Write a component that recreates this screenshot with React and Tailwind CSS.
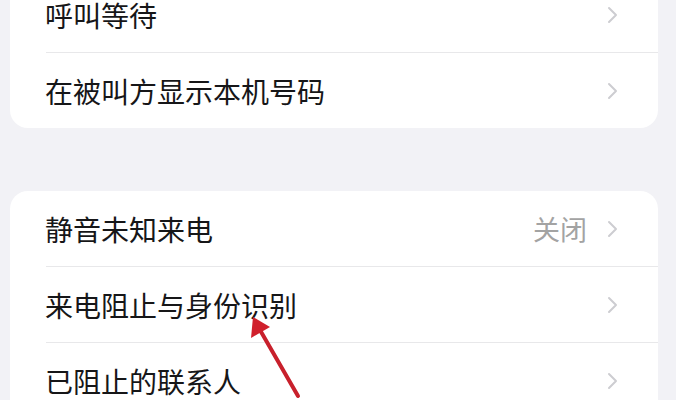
import React from 'react';

const Chevron = () => (
  <svg width="11" height="18" viewBox="0 0 11 18" className="shrink-0">
    <path d="M2 2 L9 9 L2 16" fill="none" stroke="#cdcdd1" strokeWidth="2" strokeLinecap="round" strokeLinejoin="round" />
  </svg>
);

const Row = ({ label, value, last }) => (
  <div className="flex flex-col">
    <div className="h-[75px] flex items-center pl-[35px] pr-[40px]">
      <span className="flex-1 text-[28px] text-[#161618] leading-none">{label}</span>
      {value && <span className="text-[27px] text-[#a3a3a3] leading-none mr-[20px]">{value}</span>}
      <Chevron />
    </div>
    {!last && <div className="ml-[36px] h-px bg-[#e8e8ea]" />}
  </div>
);

export default function App() {
  return (
    <div
      className="relative w-[676px] h-[400px] overflow-hidden bg-[#f2f2f6]"
      style={{ fontFamily: '"Noto Sans CJK SC", "Noto Sans", sans-serif' }}
    >
      <div className="flex flex-col gap-[63px] pl-[10px] pr-[18px] -mt-[23px]">
        <div className="bg-white rounded-[18px] overflow-hidden">
          <Row label="呼叫等待" />
          <Row label="在被叫方显示本机号码" last />
        </div>
        <div className="bg-white rounded-[18px] overflow-hidden">
          <Row label="静音未知来电" value="关闭" />
          <Row label="来电阻止与身份识别" />
          <Row label="已阻止的联系人" last />
        </div>
      </div>

      {/* red arrow annotation */}
      <svg className="absolute left-0 top-0 pointer-events-none" width="676" height="400">
        <line x1="298" y1="396" x2="260" y2="330" stroke="#c8202c" strokeWidth="4" strokeLinecap="round" />
        <polygon points="253,317 251,338 270,327" fill="#d0202c" />
      </svg>
    </div>
  );
}
